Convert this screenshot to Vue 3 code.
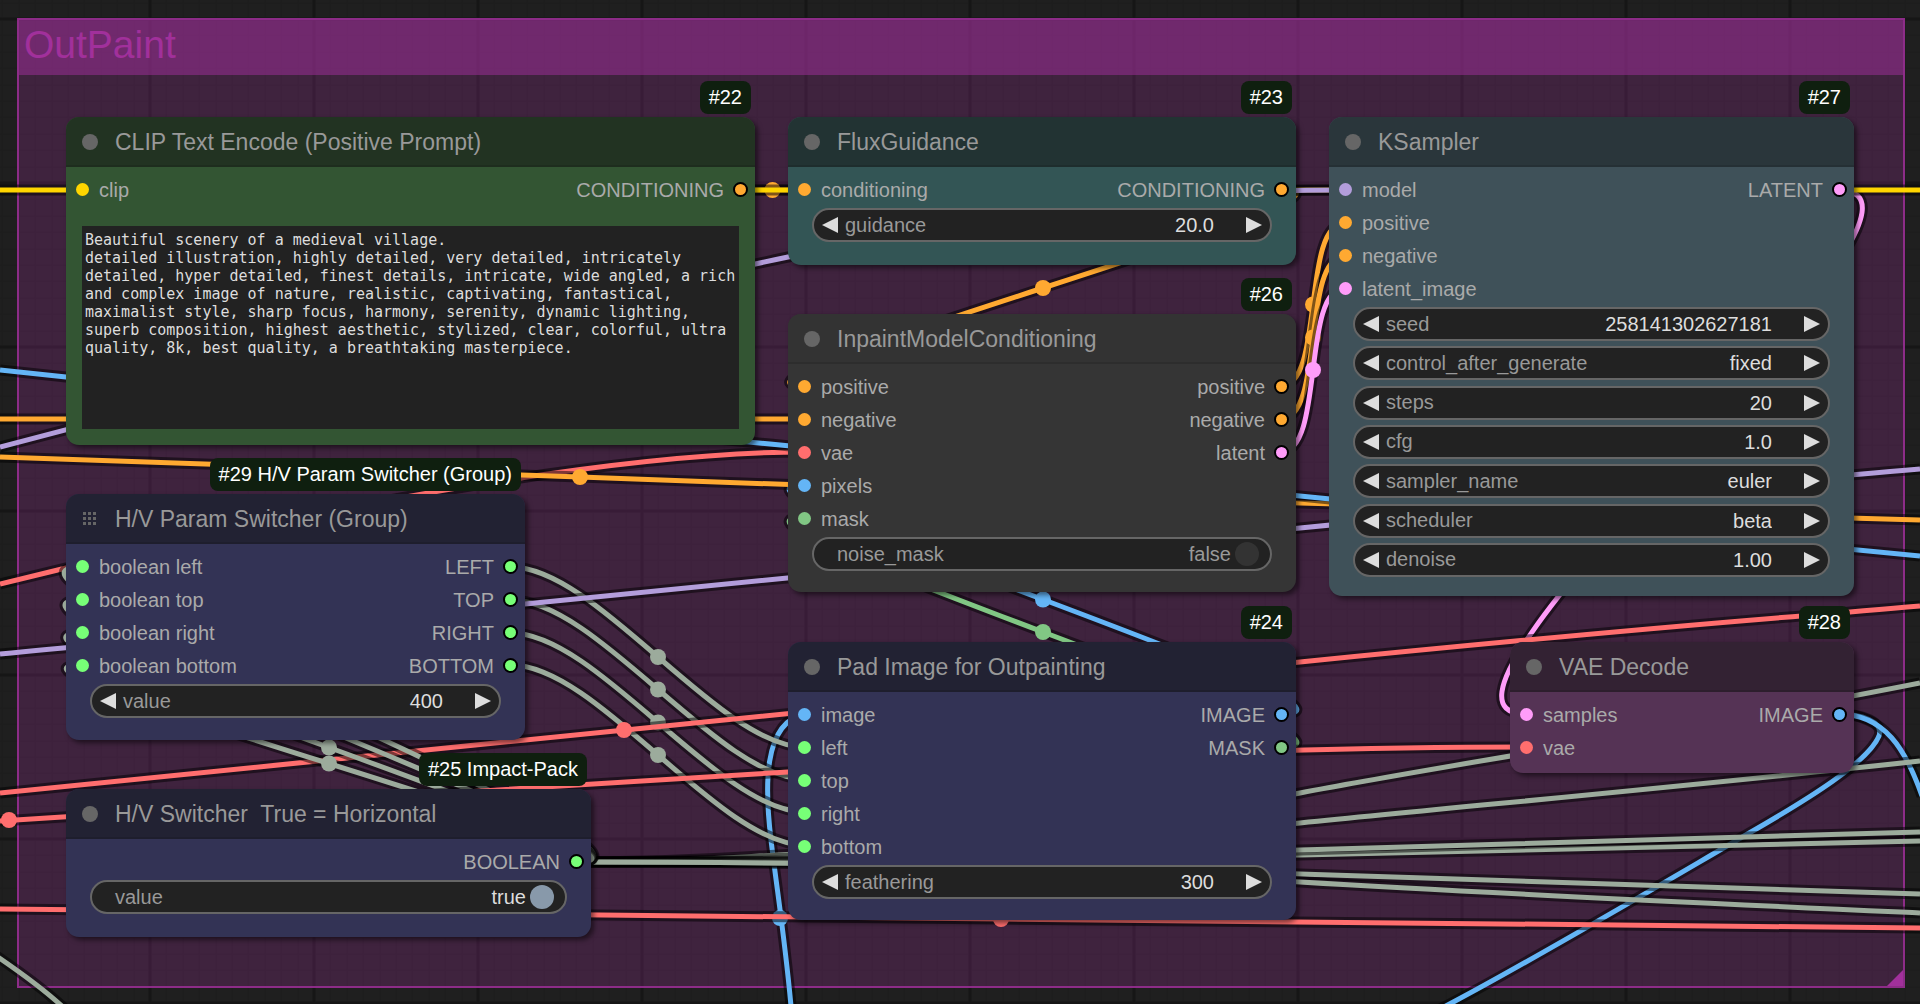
<script setup>
import { reactive } from 'vue'

const colors = {
  orange: '#ffa931',
  yellow: '#ffd500',
  lilac: '#b39ddb',
  pink: '#ff9cf9',
  red: '#ff6e6e',
  blue: '#64b5f6',
  mask: '#81c784',
  sage: '#9cab9c',
  green: '#77ff77',
}

const nodes = reactive([
  {
    id: 22, badge: '#22', title: 'CLIP Text Encode (Positive Prompt)', theme: 'forest',
    x: 66, y: 117, w: 689, h: 328,
    inputs: [['clip', 'yellow']],
    outputs: [['CONDITIONING', 'orange']],
    prompt: 'Beautiful scenery of a medieval village.\ndetailed illustration, highly detailed, very detailed, intricately detailed, hyper detailed, finest details, intricate, wide angled, a rich and complex image of nature, realistic, captivating, fantastical, maximalist style, sharp focus, harmony, serenity, dynamic lighting, superb composition, highest aesthetic, stylized, clear, colorful, ultra quality, 8k, best quality, a breathtaking masterpiece.',
    widgets: [],
  },
  {
    id: 23, badge: '#23', title: 'FluxGuidance', theme: 'teal',
    x: 788, y: 117, w: 508, h: 148,
    inputs: [['conditioning', 'orange']],
    outputs: [['CONDITIONING', 'orange']],
    widgets: [{ name: 'guidance', kind: 'text', value: '20.0' }],
  },
  {
    id: 26, badge: '#26', title: 'InpaintModelConditioning', theme: 'gray',
    x: 788, y: 314, w: 508, h: 278,
    inputs: [['positive', 'orange'], ['negative', 'orange'], ['vae', 'red'], ['pixels', 'blue'], ['mask', 'mask']],
    outputs: [['positive', 'orange'], ['negative', 'orange'], ['latent', 'pink']],
    widgets: [{ name: 'noise_mask', kind: 'toggle', value: false }],
  },
  {
    id: 27, badge: '#27', title: 'KSampler', theme: 'slate',
    x: 1329, y: 117, w: 525, h: 479,
    inputs: [['model', 'lilac'], ['positive', 'orange'], ['negative', 'orange'], ['latent_image', 'pink']],
    outputs: [['LATENT', 'pink']],
    widgets: [
      { name: 'seed', kind: 'text', value: '258141302627181' },
      { name: 'control_after_generate', kind: 'select', value: 'fixed', options: ['fixed', 'increment', 'decrement', 'randomize'] },
      { name: 'steps', kind: 'text', value: '20' },
      { name: 'cfg', kind: 'text', value: '1.0' },
      { name: 'sampler_name', kind: 'select', value: 'euler', options: ['euler', 'heun', 'dpm_2'] },
      { name: 'scheduler', kind: 'select', value: 'beta', options: ['beta', 'normal', 'karras'] },
      { name: 'denoise', kind: 'text', value: '1.00' },
    ],
  },
  {
    id: 29, badge: '#29 H/V Param Switcher (Group)', title: 'H/V Param Switcher (Group)', theme: 'navy', grouped: true,
    x: 66, y: 494, w: 459, h: 246,
    inputs: [['boolean left', 'green'], ['boolean top', 'green'], ['boolean right', 'green'], ['boolean bottom', 'green']],
    outputs: [['LEFT', 'green'], ['TOP', 'green'], ['RIGHT', 'green'], ['BOTTOM', 'green']],
    widgets: [{ name: 'value', kind: 'text', value: '400' }],
  },
  {
    id: 25, badge: '#25 Impact-Pack', title: 'H/V Switcher  True = Horizontal', theme: 'navy',
    x: 66, y: 789, w: 525, h: 148,
    inputs: [],
    outputs: [['BOOLEAN', 'green']],
    widgets: [{ name: 'value', kind: 'toggle', value: true }],
  },
  {
    id: 24, badge: '#24', title: 'Pad Image for Outpainting', theme: 'navy',
    x: 788, y: 642, w: 508, h: 278,
    inputs: [['image', 'blue'], ['left', 'green'], ['top', 'green'], ['right', 'green'], ['bottom', 'green']],
    outputs: [['IMAGE', 'blue'], ['MASK', 'mask']],
    widgets: [{ name: 'feathering', kind: 'text', value: '300' }],
  },
  {
    id: 28, badge: '#28', title: 'VAE Decode', theme: 'plum',
    x: 1510, y: 642, w: 344, h: 131,
    inputs: [['samples', 'pink'], ['vae', 'red']],
    outputs: [['IMAGE', 'blue']],
    widgets: [],
  },
])

// Spline between two slots; handles reach a quarter of the distance.
function link(color, x1, y1, x2, y2) {
  const reach = Math.round(Math.hypot(x2 - x1, y2 - y1) / 4)
  return {
    color: colors[color],
    d: `M${x1},${y1} C${x1 + reach},${y1} ${x2 - reach},${y2} ${x2},${y2}`,
    dot: [(x1 + x2) / 2, (y1 + y2) / 2],
  }
}
// Link that enters or leaves the visible area.
const wire = (color, d, dot) => ({ color: colors[color], d, dot })

const links = [
  link('orange', 740, 190, 805, 190),
  link('orange', 1281, 190, 805, 386),
  link('blue', 1281, 714, 805, 485),
  link('mask', 1281, 747, 805, 517),
  wire('blue', 'M805,714 C762,722 765,790 771,840 S785,940 791,1006', [780, 918]),
  wire('blue', 'M1838,714 C1862,714 1884,722 1879,736 C1868,762 1810,798 1751,832 S1520,968 1440,1009'),
  wire('blue', 'M1838,714 C1885,714 1906,750 1922,796'),
  link('pink', 1838, 190, 1526, 714),
  link('sage', 511, 567, 805, 747),
  link('sage', 511, 600, 805, 779),
  link('sage', 511, 633, 805, 812),
  link('sage', 511, 665, 805, 845),
  wire('sage', 'M576,862 C820,862 1150,822 1300,793 S1700,727 1920,683'),
  wire('sage', 'M576,862 C850,862 1100,843 1300,823 S1700,785 1920,761'),
  wire('sage', 'M576,862 C900,862 1100,859 1300,855 S1700,845 1920,841'),
  wire('sage', 'M576,862 C900,862 1100,856 1300,850 S1700,838 1920,832'),
  wire('sage', 'M576,862 C900,862 1100,867 1300,874 S1700,888 1920,894'),
  wire('sage', 'M576,862 C900,862 1100,870 1300,882 S1700,903 1920,913'),
  wire('red', 'M0,793 C400,753 900,702 1300,662 S1750,621 1920,606', [624, 730]),
  wire('red', 'M0,584 C150,547 560,452 805,452'),
  link('sage', 576, 862, 82, 567),
  link('sage', 576, 862, 82, 600),
  link('sage', 576, 862, 82, 633),
  link('sage', 576, 862, 82, 665),
  wire('sage', 'M-5,955 C20,972 45,990 64,1008'),
  wire('red', 'M0,821 C300,802 650,779 788,772 S1240,747 1526,747', [9, 820]),
  wire('red', 'M0,909 L1001,919 L1920,928', [1001, 919]),
  wire('orange', 'M0,457 L580,477 L1300,503 L1920,520', [580, 477]),
  wire('blue', 'M0,370 L66,377 L770,444 L1320,498 L1920,556'),
  wire('orange', 'M0,419 L805,419'),
  link('orange', 1281, 386, 1345, 223),
  link('orange', 1281, 419, 1345, 256),
  link('pink', 1281, 452, 1345, 288),
  wire('yellow', 'M0,190 L1920,190'),
  wire('lilac', 'M0,447 C260,378 560,305 788,257 S1150,190 1345,190'),
  wire('lilac', 'M0,654 C200,634 400,618 525,604 S1100,548 1300,528 S1750,483 1920,469'),
]

const minor = [16, 33, 49, 66, 82, 98, 115, 131, 148]
const box = (n) => ({ left: n.x + 'px', top: n.y + 'px', width: n.w + 'px', height: n.h + 'px' })
</script>

<template>
  <main class="canvas">
    <svg class="layer" aria-hidden="true">
      <defs>
        <pattern id="grid" x="-14" y="19" width="164" height="164" patternUnits="userSpaceOnUse">
          <g class="minor">
            <template v-for="m in minor" :key="m">
              <path :d="`M${m},0 V164`" />
              <path :d="`M0,${m} H164`" />
            </template>
          </g>
          <path class="major" d="M0,0 V164 M164,0 V164 M0,0 H164 M0,164 H164" />
        </pattern>
      </defs>
      <rect width="100%" height="100%" fill="url(#grid)" />
    </svg>

    <section class="group">
      <h1>OutPaint</h1>
      <i class="grip"></i>
    </section>

    <svg class="layer" aria-hidden="true">
      <g v-for="(l, i) in links" :key="i" fill="none">
        <path class="halo" :d="l.d" />
        <path class="core" :d="l.d" :stroke="l.color" />
        <circle v-if="l.dot" :cx="l.dot[0]" :cy="l.dot[1]" r="8" :fill="l.color" />
      </g>
    </svg>

    <article v-for="n in nodes" :key="n.id" class="node" :class="n.theme" :style="box(n)">
      <span class="badge">{{ n.badge }}</span>
      <header>
        <svg v-if="n.grouped" class="mark" viewBox="0 0 16 16">
          <template v-for="r in 3" :key="r">
            <rect v-for="c in 3" :key="c" :x="c * 5 - 4" :y="r * 5 - 4" width="3" height="3" />
          </template>
        </svg>
        <svg v-else class="mark" viewBox="0 0 16 16"><circle cx="8" cy="8" r="8" /></svg>
        <h2>{{ n.title }}</h2>
      </header>

      <div class="slots">
        <ul>
          <li v-for="[name, color] in n.inputs" :key="name">
            <i class="port" :style="{ background: colors[color] }"></i>{{ name }}
          </li>
        </ul>
        <ul class="out">
          <li v-for="[name, color] in n.outputs" :key="name">
            {{ name }}<i class="port" :style="{ background: colors[color] }"></i>
          </li>
        </ul>
      </div>

      <textarea v-if="n.prompt" v-model="n.prompt" aria-label="Prompt" spellcheck="false"></textarea>

      <div v-if="n.widgets.length" class="widgets">
        <div v-for="w in n.widgets" :key="w.name" class="widget" :class="w.kind">
          <button v-if="w.kind !== 'toggle'" type="button" :aria-label="'Decrease ' + w.name">
            <svg viewBox="0 0 16 16"><path d="M16,0 V16 L0,8 Z" /></svg>
          </button>
          <label :for="n.id + w.name">{{ w.name }}</label>
          <template v-if="w.kind === 'toggle'">
            <output :class="{ on: w.value }">{{ w.value }}</output>
            <input :id="n.id + w.name" v-model="w.value" type="checkbox" />
          </template>
          <select v-else-if="w.kind === 'select'" :id="n.id + w.name" v-model="w.value" class="value">
            <option v-for="o in w.options" :key="o">{{ o }}</option>
          </select>
          <input v-else :id="n.id + w.name" v-model="w.value" type="text" class="value" />
          <button v-if="w.kind !== 'toggle'" type="button" :aria-label="'Increase ' + w.name">
            <svg viewBox="0 0 16 16"><path d="M0,0 V16 L16,8 Z" /></svg>
          </button>
        </div>
      </div>
    </article>
  </main>
</template>

<style>
body {
  margin: 0;
  background: #1f1f1f;
}
</style>

<style scoped>
.canvas {
  position: relative;
  width: 100%;
  height: 100vh;
  overflow: hidden;
  background: #1f1f1f;
  font: 20px/33px "Liberation Sans", Arial, sans-serif;
  color: #aaa;
}
.canvas * {
  box-sizing: border-box;
}
.layer {
  position: absolute;
  inset: 0;
  width: 100%;
  height: 100%;
}
.minor {
  stroke: #1b1b1b;
  stroke-width: 1;
}
.major {
  stroke: #161616;
  stroke-width: 3;
}
.halo {
  stroke: rgba(0, 0, 0, 0.5);
  stroke-width: 11;
}
.core {
  stroke-width: 5;
}

.group {
  position: absolute;
  left: 17px;
  top: 18px;
  right: 15px;
  bottom: 16px;
  border: 2px solid rgba(161, 48, 155, 0.8);
  background: rgba(161, 48, 155, 0.25);
}
h1 {
  height: 55px;
  margin: 0;
  padding: 0 5px;
  font-size: 39px;
  font-weight: 400;
  line-height: 50px;
  color: #a1309b;
  background: rgba(161, 48, 155, 0.5);
}
.grip {
  position: absolute;
  right: 0;
  bottom: 0;
  border: 8px solid #a1309b;
  border-left-color: transparent;
  border-top-color: transparent;
}

.node {
  position: absolute;
  display: flex;
  flex-direction: column;
  border-radius: 13px;
  background: var(--body);
  box-shadow: 3px 3px 5px rgba(0, 0, 0, 0.5);
}
.forest { --head: #223322; --body: #335533; }
.teal { --head: #223333; --body: #335555; }
.gray { --head: #333333; --body: #353535; }
.slate { --head: #2a363b; --body: #3f5159; }
.navy { --head: #222233; --body: #333355; }
.plum { --head: #332233; --body: #553355; }

.badge {
  position: absolute;
  right: 4px;
  bottom: calc(100% + 3px);
  padding: 0 9px;
  border-radius: 8px;
  background: #0f1f0f;
  color: #fff;
  white-space: nowrap;
}
header {
  display: flex;
  align-items: center;
  gap: 17px;
  height: 50px;
  flex: none;
  padding: 2px 0 0 16px;
  border-radius: 13px 13px 0 0;
  border-bottom: 2px solid rgba(0, 0, 0, 0.1);
  background: var(--head);
}
.mark {
  width: 16px;
  height: 16px;
  fill: #666;
}
h2 {
  margin: 0;
  font-size: 23px;
  font-weight: 400;
  white-space: pre;
  color: #999;
}
.slots {
  display: flex;
  justify-content: space-between;
  padding: 6px 7px 0 10px;
}
ul {
  margin: 0;
  padding: 0;
  list-style: none;
}
li {
  display: flex;
  gap: 10px;
  height: 33px;
  line-height: 35px;
}
.out li {
  justify-content: flex-end;
  gap: 9px;
}
.port {
  width: 13px;
  height: 13px;
  margin-top: 10px;
  border-radius: 50%;
}
.out .port {
  width: 15px;
  height: 15px;
  margin-top: 9px;
  border: 2px solid #000;
}
textarea {
  flex: 1;
  margin: 20px 16px 16px;
  padding: 5px 2px 0 3px;
  border: 0;
  resize: none;
  overflow: hidden;
  background: #222;
  color: #ddd;
  font: 15px/18px "DejaVu Sans Mono", "Liberation Mono", monospace;
}
.widgets {
  display: flex;
  flex: 1;
  flex-direction: column;
  justify-content: space-between;
  padding: 2px 24px 19px;
}
.widget {
  display: flex;
  align-items: center;
  height: 34px;
  padding: 0 8px;
  border: 2px solid #666;
  border-radius: 17px;
  background: #222;
  color: #999;
}
.widget button {
  display: flex;
  padding: 0;
  border: 0;
  background: none;
}
.widget button svg {
  width: 16px;
  height: 16px;
  fill: #ddd;
}
.widget label {
  margin-left: 7px;
}
.value {
  flex: 1;
  min-width: 0;
  margin: 0 32px 0 0;
  padding: 0;
  border: 0;
  outline: 0;
  appearance: none;
  background: none;
  color: #ddd;
  font: inherit;
  line-height: 24px;
  text-align: right;
  text-align-last: right;
}
.toggle {
  padding: 0 11px 0 16px;
}
output {
  margin-left: auto;
}
output.on {
  color: #ddd;
}
.toggle input {
  width: 24px;
  height: 24px;
  margin: 0 0 0 4px;
  appearance: none;
  border-radius: 50%;
  background: #333;
}
.toggle input:checked {
  background: #8899aa;
}
</style>
